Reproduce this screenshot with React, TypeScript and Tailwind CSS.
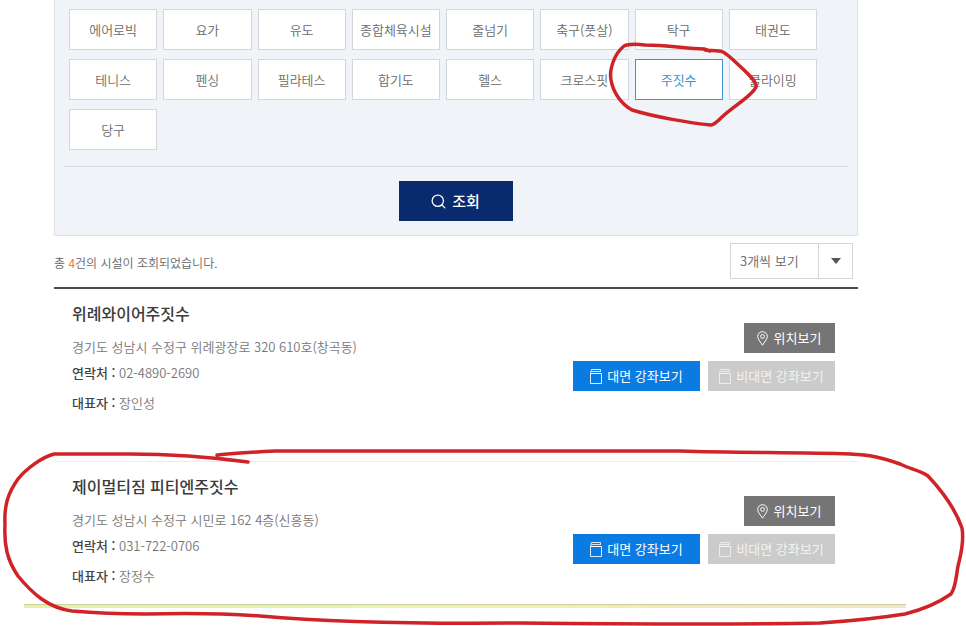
import React from 'react';
import { Search } from 'lucide-react';

interface Facility {
  id: number;
  name: string;
  address: string;
  phone: string;
  owner: string;
}

const SPORTS = [
  '에어로빅', '요가', '유도', '종합체육시설', '줄넘기', '축구(풋살)', '탁구', '태권도',
  '테니스', '펜싱', '필라테스', '합기도', '헬스', '크로스핏', '주짓수', '클라이밍',
  '당구',
];

const FACILITIES: Facility[] = [
  {
    id: 1,
    name: '위례와이어주짓수',
    address: '경기도 성남시 수정구 위례광장로 320 610호(창곡동)',
    phone: '02-4890-2690',
    owner: '장인성',
  },
  {
    id: 2,
    name: '제이멀티짐 피티엔주짓수',
    address: '경기도 성남시 수정구 시민로 162 4층(신흥동)',
    phone: '031-722-0706',
    owner: '장정수',
  },
];

function PinIcon() {
  return (
    <svg className="h-[15px] w-[11px] shrink-0" viewBox="0 0 11 15" fill="none" stroke="currentColor" aria-hidden="true">
      <path d="M5.5 14.2C4 11.6 0.7 8.3 0.7 5.5A4.8 4.8 0 0 1 10.3 5.5C10.3 8.3 7 11.6 5.5 14.2Z" />
      <circle cx="5.5" cy="5.4" r="1.9" />
    </svg>
  );
}

function CourseIcon() {
  return (
    <svg className="h-[15px] w-3 shrink-0" viewBox="0 0 12 15" fill="none" stroke="currentColor" aria-hidden="true">
      <path d="M11.5 4.5V14.5H0.5V4.5L1.5 0.5H10.5" opacity="0.85" />
      <path d="M0.5 4.5H11.5" />
      <path d="M1.5 2.5H11M10.5 0.5V2.5" opacity="0.8" />
    </svg>
  );
}

function FacilityItem({ facility }: { facility: Facility }) {
  return (
    <li className="flex items-start justify-between pr-[23px] pl-[18px] not-last:pb-12">
      <div className="pt-3">
        <h3 className="text-base leading-6 font-medium text-[#3a3a3a]">{facility.name}</h3>
        <p className="mt-3 text-[13px] leading-5 font-[350] text-[#777]">{facility.address}</p>
        <p className="mt-[6px] text-[13px] leading-5 font-[350] text-[#777]">
          <strong className="font-medium text-[#444]">연락처 :</strong> {facility.phone}
        </p>
        <p className="mt-[10px] text-[13px] leading-5 font-[350] text-[#777]">
          <strong className="font-medium text-[#444]">대표자 :</strong> {facility.owner}
        </p>
      </div>
      <div className="flex flex-col items-end gap-2 pt-[34px] text-[13px] text-white">
        <button type="button" className="flex h-[30px] w-[91px] items-center justify-center gap-[6px] bg-[#757575] pr-px">
          <PinIcon />
          위치보기
        </button>
        <div className="flex gap-2">
          <button type="button" className="flex h-[30px] w-[127px] items-center justify-center gap-[5px] bg-[#0a7be2]">
            <CourseIcon />
            대면 강좌보기
          </button>
          <button type="button" className="flex h-[30px] w-[127px] items-center justify-center gap-[5px] bg-[#cbcbcb] text-[#f2f2f2]">
            <CourseIcon />
            비대면 강좌보기
          </button>
        </div>
      </div>
    </li>
  );
}

function PenMarks() {
  return (
    <svg
      className="pointer-events-none absolute top-0 left-0 h-[626px] w-[966px]"
      viewBox="0 0 966 626"
      fill="none"
      stroke="#cf2328"
      strokeWidth="3.5"
      strokeLinecap="round"
      strokeLinejoin="round"
      aria-hidden="true"
    >
      <path d="M710 51L704 49C684 48 665 45 645 45C637 44 628 44 624 46C614 54 609 70 611 80C613 92 621 104 632 110C655 117 690 123 711 125C714 125 718 121 722 117C735 105 752 96 756 87C757 82 750 76 744 70C736 63 729 55 723 52C718 50 710 51 705 50" />
      <path d="M248 462C210 457 170 454 130 454H54C42 457 26 469 18 479C8 493 4 505 5 525C4 545 7 560 18 576C32 593 48 608 72 611C95 613 120 614 145 614C180 613 220 613 260 616C330 622 420 624 520 623C620 624 720 625 820 623C850 621 880 618 905 614C925 609 941 601 951 594C957 585 956 572 959 562C962 550 964 540 962 528C955 508 943 492 928 476C920 470 910 469 900 464C880 457 870 455 850 454C800 452 740 453 680 451H275C255 452 235 453 217 455" />
    </svg>
  );
}

export default function App() {
  const [sport, setSport] = React.useState('주짓수');

  return (
    <div
      lang="ko"
      className="relative overflow-hidden bg-white pb-[18px] font-['Noto_Sans_CJK_KR',sans-serif]"
    >
      <main className="mr-[108px] ml-[54px]">
        <section className="border border-t-0 border-[#dddfe2] bg-[#f0f4f8] px-2 pt-[9px] pb-[14px]">
          <div className="grid grid-cols-8 gap-x-[6px] gap-y-[9px] pr-8 pl-[6px]">
            {SPORTS.map((name) => (
              <button
                key={name}
                type="button"
                onClick={() => setSport(name)}
                aria-pressed={sport === name}
                className={
                  sport === name
                    ? 'h-[41px] border border-[#3c96cc] bg-white text-[13px] whitespace-nowrap text-[#3a92cc]'
                    : 'h-[41px] border border-[#d3d7db] bg-white text-[13px] font-[350] whitespace-nowrap text-[#6a6a6a]'
                }
              >
                {name}
              </button>
            ))}
          </div>
          <div className="mt-4 flex justify-center border-t border-[#d9dde1] pt-[14px]">
            <button type="button" className="flex h-10 w-[114px] items-center justify-center gap-[5px] bg-[#0a2a6e] pr-[2px] text-[15px] font-medium text-white">
              <Search className="h-[17px] w-[17px]" strokeWidth={1.8} />
              조회
            </button>
          </div>
        </section>

        <div className="flex items-center justify-between border-b-2 border-[#4a4a4a] pt-[7px] pr-[5px] pb-2">
          <p className="pt-1 text-xs font-[350] text-[#666]">
            총 <span className="text-[#ee6a1f]">4</span>건의 시설이 조회되었습니다.
          </p>
          <div className="grid w-[123px]">
            <select
              aria-label="목록 개수"
              className="col-start-1 row-start-1 h-9 appearance-none rounded-none border border-[#d5d5d5] bg-white pl-[9px] text-[13px] font-[350] text-[#666]"
            >
              <option>3개씩 보기</option>
              <option>5개씩 보기</option>
              <option>10개씩 보기</option>
            </select>
            <span className="pointer-events-none col-start-1 row-start-1 flex w-[35px] items-center justify-center justify-self-end border-l border-[#d5d5d5]">
              <svg className="h-[6px] w-[10px]" viewBox="0 0 10 6" fill="#555" aria-hidden="true">
                <path d="M0 0H10L5 6Z" />
              </svg>
            </span>
          </div>
        </div>

        <ul className="divide-y divide-[#ececec]">
          {FACILITIES.map((facility) => (
            <FacilityItem key={facility.id} facility={facility} />
          ))}
        </ul>
      </main>
      <div className="mt-[18px] mr-[60px] ml-6 h-1 border-t border-[#cdd09a] bg-linear-to-r from-[#e2f2ac] via-[#edf0b0] to-[#f3e4cc]" />
      <PenMarks />
    </div>
  );
}
